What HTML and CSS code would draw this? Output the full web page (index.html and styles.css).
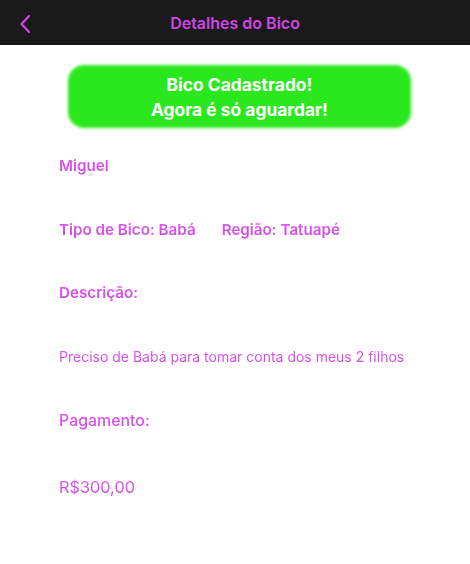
FILE: index.html
```html
<!DOCTYPE html>
<html lang="pt">
<head>
<meta charset="utf-8">
<link rel="stylesheet" href="styles.css">
</head>
<body>
<header class="topbar">
  <span class="back">
    <svg width="12" height="20" viewBox="0 0 12 20"><path d="M10 2 L2.5 10 L10 18" fill="none" stroke="#cf45e6" stroke-width="2.2" stroke-linecap="round" stroke-linejoin="round"/></svg>
  </span>
  <h1 class="title">Detalhes do Bico</h1>
</header>
<main class="content">
  <div class="banner"><span class="banner-text">Bico Cadastrado!<br>Agora é só aguardar!</span></div>
  <p class="field bold name">Miguel</p>
  <div class="row">
    <p class="field bold">Tipo de Bico: Babá</p>
    <p class="field bold">Região: Tatuapé</p>
  </div>
  <p class="field bold">Descrição:</p>
  <p class="field small">Preciso de Babá para tomar conta dos meus 2 filhos</p>
  <p class="field medium">Pagamento:</p>
  <p class="field regular">R$300,00</p>
</main>
</body>
</html>
```
FILE: styles.css
```css
html, body {
  margin: 0;
  padding: 0;
  background: #ffffff;
  font-family: Inter, "Noto Sans", sans-serif;
}
.topbar {
  height: 45px;
  background: #1a1a1a;
  display: flex;
  align-items: center;
  justify-content: center;
  position: relative;
}
.back {
  position: absolute;
  left: 19px;
  top: 14px;
  display: flex;
}
.title {
  margin: 0;
  font-size: 16px;
  font-weight: 600;
  color: #cf45e6;
}
.content {
  padding: 20px 0 0 59px;
  display: flex;
  flex-direction: column;
}
.banner {
  margin-left: 9px;
  width: 343px;
  height: 63px;
  position: relative;
  color: #ffffff;
  font-weight: 700;
  font-size: 17.4px;
  line-height: 25px;
  text-align: center;
  display: flex;
  align-items: center;
  justify-content: center;
}
.banner::before {
  content: "";
  position: absolute;
  inset: 0;
  background: #2be81e;
  border-radius: 16px;
  filter: blur(1.6px);
}
.banner-text {
  position: relative;
}
.field {
  margin: 0;
  color: #d84ae9;
  background: linear-gradient(180deg, #e35cf2 0%, #cf3fe2 100%);
  -webkit-background-clip: text;
  background-clip: text;
  -webkit-text-fill-color: transparent;
  width: max-content;
}
.bold {
  font-size: 15.2px;
  font-weight: 600;
  line-height: 20px;
}
.name {
  margin-top: 28px;
}
.row {
  display: flex;
  gap: 26px;
  margin-top: 44px;
}
.row + .field {
  margin-top: 43px;
}
.small {
  font-size: 14px;
  font-weight: 400;
  line-height: 18px;
  margin-top: 45px;
}
.medium {
  font-size: 15.9px;
  font-weight: 500;
  line-height: 20px;
  margin-top: 45px;
}
.regular {
  font-size: 16.3px;
  font-weight: 400;
  line-height: 20px;
  margin-top: 46px;
}
```
